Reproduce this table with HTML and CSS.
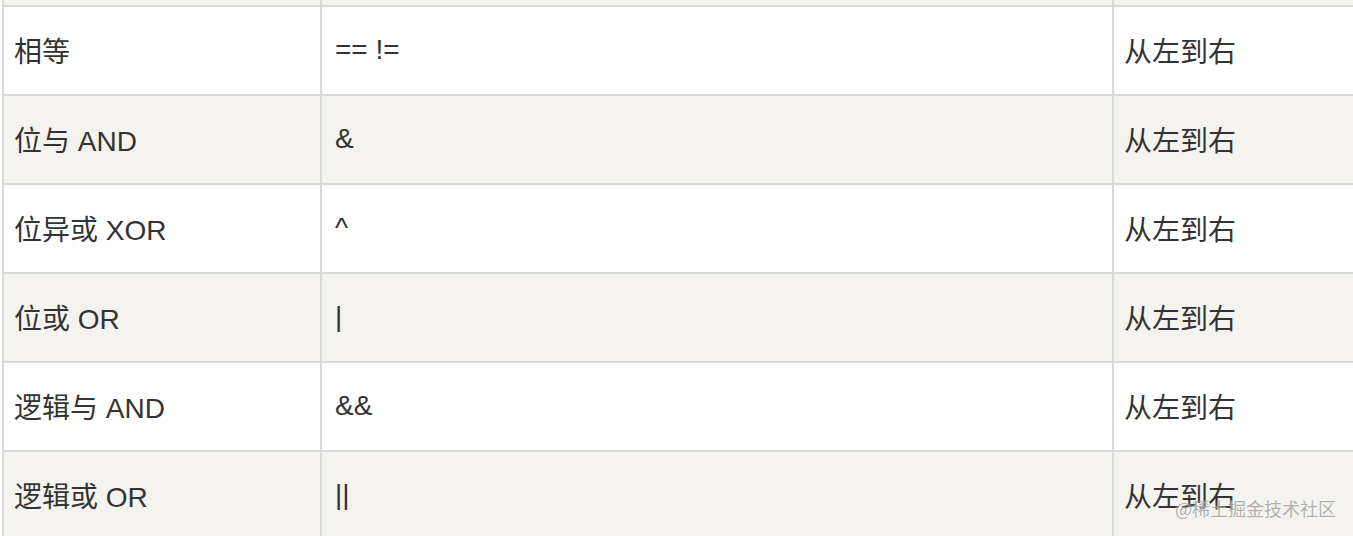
FILE: index.html
```html
<!DOCTYPE html>
<html lang="zh">
<head>
<meta charset="utf-8">
<link rel="stylesheet" href="styles.css">
</head>
<body>
<div class="page">
  <table class="ops">
    <tr class="alt prev"><td class="c1"></td><td class="c2"></td><td class="c3"></td></tr>
    <tr><td class="c1">相等</td><td class="c2">== !=</td><td class="c3">从左到右</td></tr>
    <tr class="alt"><td class="c1">位与 AND</td><td class="c2">&amp;</td><td class="c3">从左到右</td></tr>
    <tr><td class="c1">位异或 XOR</td><td class="c2">^</td><td class="c3">从左到右</td></tr>
    <tr class="alt"><td class="c1">位或 OR</td><td class="c2">|</td><td class="c3">从左到右</td></tr>
    <tr><td class="c1">逻辑与 AND</td><td class="c2">&amp;&amp;</td><td class="c3">从左到右</td></tr>
    <tr class="alt"><td class="c1">逻辑或 OR</td><td class="c2">||</td><td class="c3">从左到右</td></tr>
  </table>
  <div class="watermark">@稀土掘金技术社区</div>
</div>
</body>
</html>
```
FILE: styles.css
```css
html, body {
  margin: 0;
  padding: 0;
  background: #ffffff;
}
.page {
  position: relative;
  width: 1353px;
  height: 536px;
  overflow: hidden;
}
.ops {
  border-collapse: separate;
  border-spacing: 0;
  margin: -82px 0 0 2px;
  table-layout: fixed;
  width: 1420px;
  font-family: "Liberation Sans", "Noto Sans CJK SC", sans-serif;
  font-size: 28px;
  color: #333333;
}
.ops td {
  box-sizing: border-box;
  height: 89px;
  padding: 0 12px 1px;
  border-right: 2px solid #d9d9d9;
  border-bottom: 2px solid #d9d9d9;
  vertical-align: middle;
  background: #ffffff;
  white-space: nowrap;
}
.ops tr.alt td {
  background: #f4f3ef;
}
.ops td.c1 {
  width: 320px;
  border-left: 2px solid #d9d9d9;
  padding-left: 10px;
}
.ops td.c2 {
  width: 792px;
  padding-left: 13px;
}
.ops td.c3 {
  width: 308px;
  padding-left: 10px;
}
.watermark {
  position: absolute;
  right: 17px;
  bottom: 16px;
  font-family: "Noto Sans CJK SC", sans-serif;
  font-size: 18px;
  line-height: 24px;
  color: rgba(150, 150, 150, 0.75);
  text-shadow: 0 0 2px rgba(255, 255, 255, 0.8);
}
```
